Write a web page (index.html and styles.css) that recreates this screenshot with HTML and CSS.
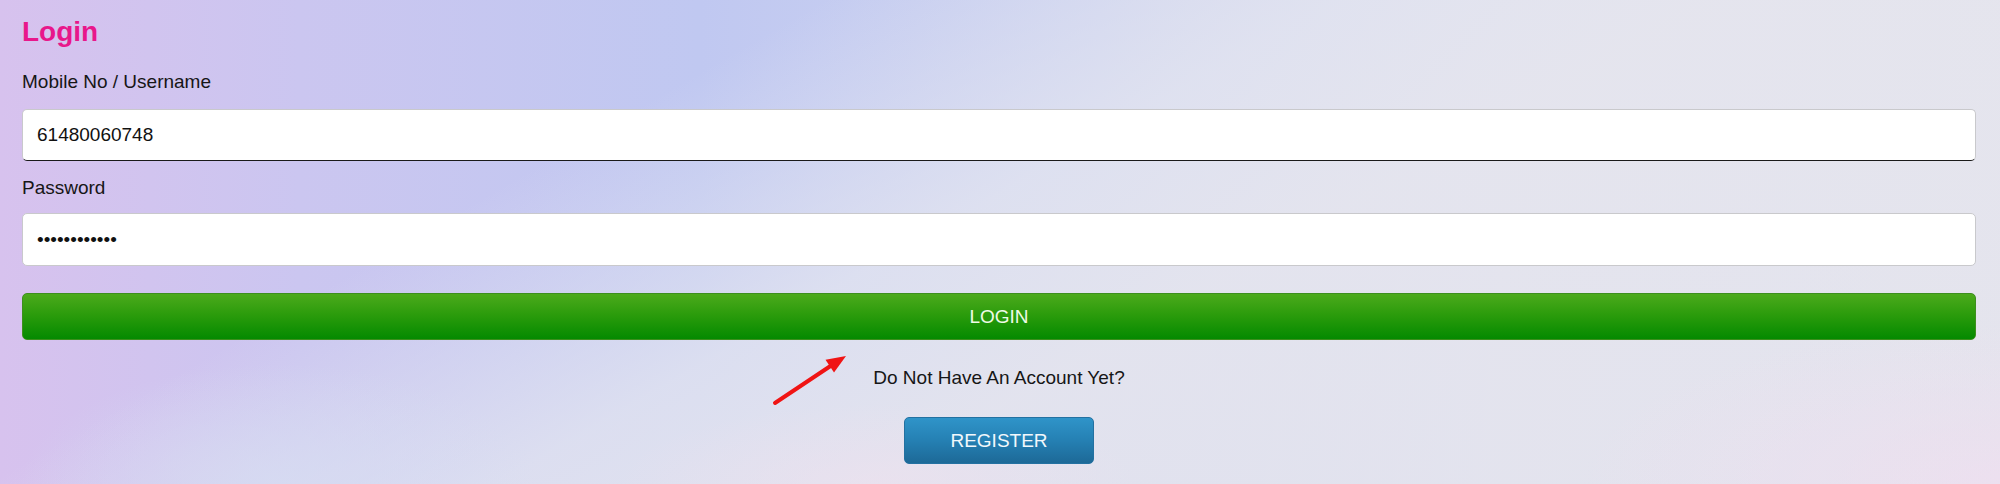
FILE: index.html
```html
<!DOCTYPE html>
<html lang="en">
<head>
<meta charset="utf-8">
<title>Login</title>
<link rel="stylesheet" href="styles.css">
</head>
<body>
<main class="page">
  <h1 class="title">Login</h1>
  <form class="form">
    <label class="label label-first" for="user">Mobile No / Username</label>
    <input class="field field-active" id="user" type="text" value="61480060748">
    <label class="label label-second" for="pass">Password</label>
    <input class="field field-pass" id="pass" type="password" value="abcdefghijkl">
    <button class="btn-login" type="button">LOGIN</button>
    <p class="no-account">Do Not Have An Account Yet?</p>
    <div class="register-row">
      <button class="btn-register" type="button">REGISTER</button>
    </div>
  </form>
  <svg class="arrow" width="82" height="58" viewBox="0 0 82 58" aria-hidden="true">
    <line x1="5" y1="53" x2="62" y2="15" stroke="#f01414" stroke-width="4" stroke-linecap="round"/>
    <polygon points="76,6 64,22.5 55.5,9.8" fill="#f01414"/>
  </svg>
</main>
</body>
</html>
```
FILE: styles.css
```css
html, body {
  margin: 0;
  padding: 0;
}

body {
  min-height: 484px;
  font-family: "Liberation Sans", Arial, sans-serif;
  color: #161616;
  background:
    radial-gradient(ellipse 420px 160px at 100% 100%, rgba(240, 222, 240, 0.7), rgba(240, 222, 240, 0)),
    radial-gradient(ellipse 260px 80px at 44% 100%, rgba(238, 224, 238, 0.6), rgba(238, 224, 238, 0)),
    radial-gradient(ellipse 260px 120px at 14% 100%, rgba(214, 220, 242, 0.75), rgba(214, 220, 242, 0)),
    linear-gradient(150deg, rgba(228, 229, 239, 0) 0%, rgba(228, 229, 239, 0) 29%, rgba(226, 228, 240, 0.8) 47%, rgba(229, 229, 238, 0.9) 60%, rgba(228, 228, 238, 0.6) 100%),
    linear-gradient(90deg, #d7c2ee 0%, #cbc6f0 15%, #c0c8f1 35%, #cdd3f0 55%, #dfe0ee 75%, #e4e4ec 100%);
}

.page {
  position: relative;
  padding: 15px 24px 0 22px;
}

.title {
  margin: 0;
  font-size: 28px;
  line-height: 34px;
  font-weight: bold;
  color: #e8178b;
}

.form {
  display: flex;
  flex-direction: column;
}

.label {
  display: block;
  font-size: 19px;
  line-height: 22px;
  color: #161616;
}

.label-first {
  margin: 22px 0 16px;
}

.label-second {
  margin: 16px 0 14px;
}

.field {
  box-sizing: border-box;
  width: 100%;
  margin: 0;
  padding: 0 14px;
  border: 1px solid #c9c9cc;
  border-radius: 5px;
  background: #ffffff;
  font-family: "Liberation Sans", Arial, sans-serif;
  font-size: 19px;
  color: #111;
  outline: none;
}

.field-active {
  height: 52px;
  border-bottom: 1.5px solid #1a1a1a;
}

.field-pass {
  height: 53px;
}

.btn-login {
  box-sizing: border-box;
  width: 100%;
  height: 47px;
  margin: 27px 0 0;
  border: 1px solid #3d8f1e;
  border-radius: 5px;
  background: linear-gradient(180deg, #4caa1c 0%, #2c9c0c 45%, #048a00 100%);
  color: #eefbe6;
  font-family: "Liberation Sans", Arial, sans-serif;
  font-size: 19px;
  cursor: pointer;
}

.no-account {
  margin: 27px 0 0;
  text-align: center;
  font-size: 19px;
  line-height: 22px;
  color: #161616;
}

.register-row {
  display: flex;
  justify-content: center;
  margin-top: 28px;
}

.btn-register {
  box-sizing: border-box;
  width: 190px;
  height: 47px;
  border: 1px solid #2371a1;
  border-radius: 5px;
  background: linear-gradient(180deg, #2f94c9 0%, #2580b3 50%, #1d6997 100%);
  color: #f2f8fc;
  font-family: "Liberation Sans", Arial, sans-serif;
  font-size: 19px;
  cursor: pointer;
}

.arrow {
  position: absolute;
  left: 770px;
  top: 350px;
}
```
